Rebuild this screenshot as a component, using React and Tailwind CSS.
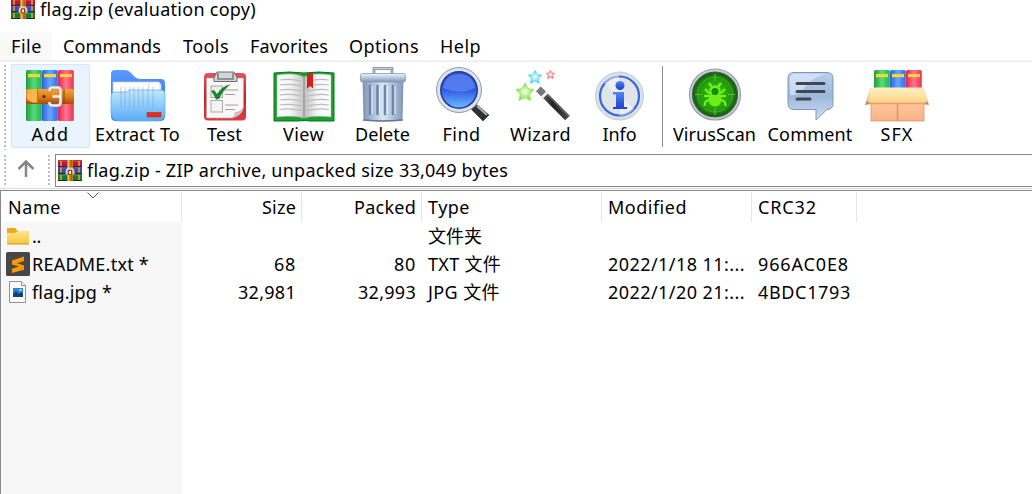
import { useLayoutEffect, useRef, useState } from 'react';

// Text whose tracking is adjusted so the run occupies w pixels.
function Label({ w, children, className = '' }) {
  const ref = useRef(null);
  const [gap, setGap] = useState(0);
  useLayoutEffect(() => {
    const natural = ref.current.getBoundingClientRect().width;
    setGap((w - natural) / children.length);
  }, []);
  return (
    <span ref={ref} className={`inline-block whitespace-pre ${className}`} style={{ letterSpacing: gap }}>
      {children}
    </span>
  );
}

const gradients = [
  ['green', 0, ['#1c9a45', '#58dc78', '#1fb04c']],
  ['blue', 0, ['#2a62dc', '#66a8ff', '#2f6cf0']],
  ['red', 0, ['#e3244a', '#ff7890', '#f02f50']],
  ['belt', 1, ['#f2a53a', '#e0801a', '#a84c08']],
  ['back', 1, ['#5c9cff', '#3f7df5', '#2f62dd']],
  ['front', 1, ['#c4e8ff', '#8accfc', '#5aa9f5']],
  ['clip', 1, ['#e8525a', '#d0202c', '#e03a42']],
  ['page', 0, ['#ffffff', '#f4f4f4', '#c4c4c4']],
  ['page2', 0, ['#bdbdbd', '#f6f6f6', '#ffffff']],
  ['can', 0, ['#7f98b8', '#dbe7f5', '#829bbc']],
  ['lid', 1, ['#f2f7fc', '#b6c8dd', '#7d96b6']],
  ['lens', 1, ['#2a51d8', '#2f5be6', '#69b8ff']],
  ['wand', 0, ['#777777', '#222222', '#444444']],
  ['info', 1, ['#5488f2', '#345fdf', '#2440d0']],
  ['bubble', 1, ['#b9cfec', '#9db8dc', '#d2dfef']],
  ['box', 1, ['#ffc69a', '#ffc093', '#f9b183']],
  ['flap', 1, ['#fff0bf', '#fde3a2', '#fbd18c']],
  ['folder', 1, ['#ffe38c', '#ffd765', '#f9c840']],
];

function Defs() {
  return (
    <svg className="absolute size-0" aria-hidden="true">
      <defs>
        {gradients.map(([id, vertical, c]) => (
          <linearGradient key={id} id={id} x1="0" y1="0" x2={vertical ? 0 : 1} y2={vertical ? 1 : 0}>
            <stop offset="0" stopColor={c[0]} />
            <stop offset=".5" stopColor={c[1]} />
            <stop offset="1" stopColor={c[2]} />
          </linearGradient>
        ))}
        <radialGradient id="virus">
          <stop offset="0" stopColor="#44c814" />
          <stop offset=".7" stopColor="#209a0c" />
          <stop offset="1" stopColor="#0d5d06" />
        </radialGradient>
        <radialGradient id="starGreen"><stop offset="0" stopColor="#fff" /><stop offset="1" stopColor="#75e329" /></radialGradient>
        <radialGradient id="starBlue"><stop offset="0" stopColor="#fff" /><stop offset="1" stopColor="#35cdf8" /></radialGradient>
        <radialGradient id="starRed"><stop offset="0" stopColor="#fff" /><stop offset="1" stopColor="#f4606a" /></radialGradient>
      </defs>
    </svg>
  );
}

function Books({ x, y, h }) {
  return (
    <g>
      {['green', 'blue', 'red'].map((c, i) => (
        <g key={c}>
          <rect x={x + i * 16} y={y} width="15.8" height={h} rx="1.5" fill={`url(#${c})`} />
          <rect x={x + 2 + i * 16} y={y + 4} width="12" height="3.2" fill="#ffd52e" />
        </g>
      ))}
    </g>
  );
}

const AddIcon = (
  <g>
    <Books x={26} y={70} h={51} />
    <path d="M26 89h3q-3 7 0 15h-3z" fill="#9b4b0a" />
    <rect x="26" y="89" width="48" height="15" rx="2" fill="url(#belt)" />
    <path d="M27 95q1-5 6-5.500h4v13h-4q-5-1-6-5z" fill="#f9b650" />
    <path d="M37.500 89.500v14" stroke="#c56c14" />
    <path d="M64 89v15" stroke="#8a3e08" strokeWidth="1" />
    <circle cx="44" cy="96.500" r="1.500" fill="#4b2104" />
    <path d="M49.500 91v-1q0-2.500 3-2.500h5q3 0 3 3v12q0 3-3 3h-5q-3 0-3-2.500v-1" fill="none" stroke="#80878f" strokeWidth="3.400" />
    <path d="M49.500 91v-1q0-2.500 3-2.500h5q3 0 3 3v12q0 3-3 3h-5q-3 0-3-2.500v-1" fill="none" stroke="#eceff1" strokeWidth="2.400" />
    <path d="M52.500 96.500h7.500" stroke="#f2f4f5" strokeWidth="2.600" />
    <path d="M53 98.300h6" stroke="#8a8f94" strokeWidth=".8" />
  </g>
);
const ExtractIcon = (
  <g>
    <path d="M111 74q0-4 4-4h10q3 0 5 2l5 5q2 2 5 2h21q4 0 4 4v33q0 5-5 5h-44q-5 0-5-5z" fill="url(#back)" />
    <path d="M113 82h46l2 3v25h-48z" fill="#fff" stroke="#c6d9ee" strokeWidth=".7" />
    <path d="M149 82v24M160 84v20" stroke="#d8dfe9" strokeWidth="1" />
    <path d="M111 96q0-4 4-4h9q3 0 5-1.500t5-.5h27q4 0 4 4v19q0 8-8 8h-38q-8 0-8-8z" fill="url(#front)" stroke="#59a9ee" strokeWidth=".7" />
    {[121, 125, 129.500, 134, 138.500, 143, 148, 153].map((x) => (
      <path key={x} d={`M${x} 87v21`} stroke="#7c9fbd" strokeWidth="1.300" opacity=".4" />
    ))}
    <rect x="147" y="112.500" width="14" height="4.500" fill="#eb2b16" stroke="#b52512" strokeWidth=".5" />
  </g>
);
const TestIcon = (
  <g>
    <rect x="204" y="73" width="42" height="47.500" rx="4" fill="url(#clip)" />
    <path d="M206.500 78h37v29q-1 9-12 11h-25z" fill="#f8f8f8" stroke="#a9a9a9" strokeWidth=".6" />
    <path d="M243.500 107q-3 5-9 5 1 5-5 6 12-1 14-11z" fill="#c4c4c4" />
    <path d="M214 77.500l3-5.500h17l3 5.500v4h-23z" fill="#d3d5d6" stroke="#696d70" />
    <path d="M218 73v6h15v-6" fill="none" stroke="#777c80" strokeWidth="1.500" />
    <rect x="211" y="86" width="11.500" height="11.500" fill="#eee" stroke="#aaa" />
    <rect x="211" y="100.500" width="11.500" height="11.500" fill="#f4f4f4" stroke="#aaa" />
    <path d="M225 90h13M225 94.500h10M225 105h13M225 109.500h10" stroke="#a5999b" strokeWidth="1.200" />
    <path d="M211 91l3-1 3 4q5-8 14-10-8 6-12 15l-3 .5q-2-5-5-8.500z" fill="#16872c" />
  </g>
);
const ViewIcon = (
  <g>
    <path d="M274 73q15-2 30 0 15-2 30 0v48h-24q-6-1-12 0h-24z" fill="#18a12a" stroke="#08731a" />
    <path d="M277 75q18-3 27 2v41q-10-3-27-1z" fill="url(#page)" stroke="#aaa" strokeWidth=".5" />
    <path d="M331 75q-18-3-27 2v41q10-3 27-1z" fill="url(#page2)" stroke="#aaa" strokeWidth=".5" />
    {[80, 85, 90, 95, 100, 105, 109.500].map((y) => (
      <path key={y} d={`M279.500 ${y}q12-1.500 22 1M307 ${y + 1}q12-2.500 22-1`} fill="none" stroke="#bcbcbc" strokeWidth="1.200" />
    ))}
    <path d="M304 77v41" stroke="#888" strokeWidth=".8" />
    <path d="M307 73.500h6v15l-3-2.500-3 3z" fill="#d3201d" />
  </g>
);
const DeleteIcon = (
  <g>
    <path d="M374 74v-5.500h18V74" fill="none" stroke="#6d7f98" strokeWidth="2.600" />
    <path d="M374 74v-5.500h18V74" fill="none" stroke="#c5d0df" strokeWidth="1" />
    <path d="M363 81h40l-1 39q-19 2-38 0z" fill="url(#can)" stroke="#667f9f" strokeWidth=".7" />
    {[370, 377.500, 385, 393].map((x) => (
      <g key={x}>
        <path d={`M${x} 86v28`} stroke="#6b87ac" strokeWidth="2.600" strokeLinecap="round" />
        <path d={`M${x + 2} 86v28`} stroke="#edf4fb" strokeWidth="1" />
      </g>
    ))}
    <path d="M363 120q20 2 40 0" fill="none" stroke="#637b9b" strokeWidth="1.500" />
    <rect x="360.500" y="73.500" width="45" height="8.500" rx="2" fill="url(#lid)" stroke="#8299b5" strokeWidth=".8" />
  </g>
);
const FindIcon = (
  <g>
    <path d="M476 104l13 11-6 6-12-12z" fill="#2f3137" stroke="#575a60" />
    <path d="M477 106l10 9" stroke="#a9adb5" strokeWidth="2" />
    <path d="M471 103l4-3 3 3-4 4z" fill="#a6adb7" />
    <circle cx="459" cy="90" r="22.500" fill="#dce2e8" stroke="#8e99a7" />
    <circle cx="459" cy="90" r="19" fill="#203b91" />
    <circle cx="459" cy="90" r="17.500" fill="url(#lens)" />
    <path d="M443 88q2-14 16-14t16 14q-15 7-32 0z" fill="#8baefc" opacity=".4" />
  </g>
);
const star = 'M0-9L3-3.300 9-2.500 4.600 2 5.500 8.500 0 5.500-6 8.500-4.800 2-9-2.500-3-3.300z';
const WizardIcon = (
  <g>
    <path d="M538.500 89l29 29" stroke="url(#wand)" strokeWidth="6.500" />
    <path d="M540 87.500l29 29" stroke="#89898b" strokeWidth="1" />
    <path d="M538.500 89l5 5" stroke="#777" strokeWidth="6.500" />
    <path d="M543.500 94l2 2" stroke="#f1f1f1" strokeWidth="7" />
    <path d={star} transform="translate(525 92)" fill="url(#starGreen)" stroke="#8be853" strokeWidth=".8" />
    <path d={star} transform="translate(535 77) scale(.76)" fill="url(#starBlue)" stroke="#6adcf5" />
    <path d={star} transform="translate(550.500 74.500) scale(.5)" fill="url(#starRed)" stroke="#f07d83" />
  </g>
);
const InfoIcon = (
  <g>
    <circle cx="619.500" cy="96" r="24" fill="#d9dfe5" stroke="#c3ccd6" />
    <circle cx="619.500" cy="96" r="19.500" fill="#dfe4e9" stroke="#3565df" strokeWidth="2.200" />
    <path d="M619 96L604 83q6-8 15-8zM620 96l14 13q-6 7-14 7z" fill="#fff" opacity=".45" />
    <circle cx="620" cy="85.500" r="4.500" fill="url(#info)" />
    <path d="M613 92h11v15h3v2h-14v-2h3V94.500h-3z" fill="url(#info)" />
  </g>
);
const VirusIcon = (
  <g>
    <circle cx="715" cy="94.500" r="25.500" fill="#c7cdd3" stroke="#98a0a9" strokeWidth="1.200" />
    <circle cx="715" cy="94.500" r="22.500" fill="url(#virus)" stroke="#4d5858" strokeWidth="1.200" />
    <circle cx="715" cy="94.500" r="17.500" fill="none" stroke="#4ca938" />
    <path d="M715 74v7M715 108v7M695 94.500h7M728 94.500h7" stroke="#5cba43" strokeWidth="1.200" />
    <path d="M709 83l3 4M721 83l-3 4M705 89l4 4h3M725 89l-4 4h-3M704 96h6l2 3M726 96h-6l-2 3M709 100q-5 1-4.500 6M721 100q5 1 4.500 6" stroke="#75f31b" strokeWidth="2.200" fill="none" />
    <ellipse cx="715" cy="99.500" rx="6.500" ry="7" fill="#70ed19" />
    <circle cx="715" cy="91" r="5.800" fill="#70ed19" />
    <circle cx="715" cy="91.500" r="3.500" fill="#168a08" />
  </g>
);
const CommentIcon = (
  <g>
    <path d="M794 72.500h33q6 0 6 6v25q0 6-6 6l-11 10.500v-10.500h-22q-6 0-6-6v-25q0-6 6-6z" fill="url(#bubble)" stroke="#7c98be" />
    <path d="M795 74h30q-12 3-20 13t-15 8V79q0-5 5-5z" fill="#e5effb" opacity=".6" />
    <path d="M797 83.500h27M797 91.500h27M797 99h13" stroke="#424650" strokeWidth="3" strokeLinecap="round" />
  </g>
);
const SfxIcon = (
  <g>
    <Books x={874} y={70} h={22} />
    <path d="M871 88l-6 17 6-1zM923 88l6 17-6-1z" fill="#c98159" />
    <path d="M871 98h53v23h-53z" fill="url(#box)" stroke="#d88e62" strokeWidth=".7" />
    <path d="M897.500 104v17" stroke="#d49674" strokeWidth="1.500" />
    <path d="M871 87.500h52l5 14-4 1.500h-53l-4-1.500z" fill="url(#flap)" />
    <path d="M867 101.500l4 2h53l4-2" fill="none" stroke="#ee9f67" strokeWidth="1.300" />
  </g>
);

function RarMark({ className }) {
  return (
    <svg viewBox="0 0 24 21" preserveAspectRatio="none" className={className}>
      <path d="M0 1L1 0h22l1 1v20H0z" fill="#23203a" />
      <path d="M1 0h22l1 1v5H0V1z" fill="#b4183c" />
      <path d="M0 7h24v6H0z" fill="#4644a4" />
      <path d="M0 14h24v6H0z" fill="#157c35" />
      <path d="M1 1h22" stroke="#dc4868" /><path d="M1 8h22" stroke="#6a67c8" /><path d="M1 15h22" stroke="#2f9d4c" />
      <path d="M3 1v5M3 7.500v5M3 15v5M21 1v5M21 7.500v5M21 15v5" stroke="#e8a326" strokeWidth="1.600" />
      <path d="M9 0h6v21H9z" fill="#c77415" />
      <path d="M10.500 0v21" stroke="#ffc345" strokeWidth="1.500" />
      <path d="M13.500 0v21" stroke="#9a4f12" strokeDasharray="1 1" />
      <path d="M8.500 14.500v-3q0-3 3.500-3t3.500 3v3" fill="none" stroke="#d4d0d0" strokeWidth="1.800" />
      <path d="M10 10h4v5h-4z" fill="#90430b" />
      <path d="M11 11h2v3h-2z" fill="#fff0da" />
    </svg>
  );
}

const menu = [
  ['File', 31, 'w-[52px] pl-[11px] bg-[#f9f9f9]'],
  ['Commands', 98, 'w-[120px] pl-[11px]'],
  ['Tools', 46, 'w-[67px] pl-[11px]'],
  ['Favorites', 78, 'w-[99px] pl-[11px]'],
  ['Options', 70, 'w-[91px] pl-[11px]'],
  ['Help', 41, 'w-[63px] pl-[11px]'],
];

const tools = [
  ['Add', 38, 11, 79, 'w-[79px] bg-[#e9f4fe] border-[#cce8ff]', AddIcon],
  ['Extract To', 85, 90, 95, 'w-[95px] border-transparent', ExtractIcon],
  ['Test', 35, 185, 79, 'w-[79px] border-transparent', TestIcon],
  ['View', 41, 264, 79, 'w-[79px] border-transparent', ViewIcon],
  ['Delete', 55, 343, 79, 'w-[79px] border-transparent', DeleteIcon],
  ['Find', 38, 422, 79, 'w-[79px] border-transparent', FindIcon],
  ['Wizard', 61, 501, 79, 'w-[79px] border-transparent', WizardIcon],
  ['Info', 34, 580, 79, 'w-[79px] border-transparent', InfoIcon],
  null,
  ['VirusScan', 83, 671, 87, 'w-[87px] border-transparent', VirusIcon],
  ['Comment', 85, 758, 104, 'w-[104px] border-transparent', CommentIcon],
  ['SFX', 33, 862, 70, 'w-[70px] border-transparent', SfxIcon],
];

const FolderIcon = (
  <svg viewBox="0 0 24 20" className="h-5 w-6">
    <path d="M1 2h8l3 3h11v13H1z" fill="#edaa22" />
    <path d="M1 7h8l3-2h11v12.500H1z" fill="url(#folder)" />
    <path d="M1 18h22" stroke="#d99b22" />
  </svg>
);
const SublimeIcon = (
  <svg viewBox="0 0 24 24" className="size-6">
    <rect width="24" height="24" rx="1.500" fill="#474747" />
    <path d="M6 8.500L18 4.500v4.500L11 11.300l7 2.200v4.300L6 21v-4.300l7-2.200-7-2z" fill="#ff9800" />
  </svg>
);
const ImageIcon = (
  <svg viewBox="0 0 24 24" className="size-6">
    <path d="M3.500 1.500h12l4 4v17h-16z" fill="#fafafa" stroke="#929292" />
    <path d="M15.500 1.500v4h4" fill="#eee" stroke="#929292" />
    <path d="M7 8h10v9H7z" fill="#2986d8" />
    <path d="M7 14l3-3 3 3 2-2 2 2v3H7z" fill="#12416e" />
    <circle cx="14.500" cy="10" r="1" fill="#fff" />
  </svg>
);

const headers = [
  ['Name', 53, 'w-[181px] pl-[7px]'],
  ['Size', 34, 'w-[120px] justify-end pr-[5px]'],
  ['Packed', 62, 'w-[120px] justify-end pr-[5px]'],
  ['Type', 42, 'w-[180px] pl-1.5'],
  ['Modified', 79, 'w-[150px] pl-1.5'],
  ['CRC32', 59, 'w-[105px] pl-1.5'],
];

const rows = [
  { icon: FolderIcon, cells: [['..', 9], null, null, ['文件夹', 54], null, null] },
  { icon: SublimeIcon, cells: [['README.txt *', 117], ['68', 22], ['80', 22], ['TXT 文件', 73], ['2022/1/18 11:...', 137], ['966AC0E8', 91]] },
  { icon: ImageIcon, cells: [['flag.jpg *', 80], ['32,981', 58], ['32,993', 58], ['JPG 文件', 72], ['2022/1/20 21:...', 137], ['4BDC1793', 93]] },
];
const cellClass = [
  'w-[152px] pl-0.5',
  'w-[120px] justify-end pr-1.5',
  'w-[120px] justify-end pr-1.5',
  'w-[180px] pl-1.5',
  'w-[150px] pl-1.5',
  'w-[105px] pl-1.5',
];

function Grip({ className }) {
  return (
    <svg className={className} aria-hidden="true">
      <path d="M1 1v100" stroke="#bdbdbd" strokeWidth="2" strokeDasharray="2 2" />
    </svg>
  );
}

export default function App() {
  return (
    <div className="flex h-[494px] w-[1032px] flex-col overflow-hidden bg-white font-['Noto_Sans','Noto_Sans_CJK_SC',sans-serif] text-[18px] leading-6 text-black">
      <Defs />
      <header className="flex h-8 shrink-0 items-start pl-[11px]">
        <RarMark className="-mt-px h-5 w-6" />
        <Label w={216} className="ml-[5px] leading-[18px]">flag.zip (evaluation copy)</Label>
      </header>
      <nav className="flex h-[30px] shrink-0 items-center border-b-2 border-[#f0f0f0]">
        {menu.map(([name, w, cls]) => (
          <div key={name} className={`flex h-7 items-center ${cls}`}><Label w={w}>{name}</Label></div>
        ))}
      </nav>
      <div className="flex h-[90px] shrink-0 items-start pt-0.5">
        <Grip className="ml-1 mr-[5px] h-[86px] w-0.5" />
        {tools.map((t) => t ? (
          <button key={t[0]} className={`flex h-[84px] shrink-0 flex-col items-center rounded-xs border pt-px ${t[4]}`}>
            <svg viewBox={`${t[2] + 1} 66 ${t[3] - 2} 56`} className="h-14 w-full shrink-0">{t[5]}</svg>
            <Label w={t[1]}>{t[0]}</Label>
          </button>
        ) : (
          <div key="divider" className="ml-[3px] mr-2 mt-0.5 h-[81px] w-px bg-[#8d8d8d]" />
        ))}
      </div>
      <div className="flex h-[37px] shrink-0 items-start border-b border-[#dcdcdc] pt-0.5">
        <Grip className="ml-1 h-[33px] w-0.5" />
        <svg viewBox="0 0 20 20" className="ml-2.5 mt-[5px] size-5" fill="none" stroke="#868686" strokeWidth="2.500">
          <path d="M10 18V2.500M2.500 10L10 2.500 17.500 10" />
        </svg>
        <Grip className="ml-3 h-[33px] w-0.5" />
        <div className="ml-[5px] flex h-[33px] flex-1 items-center border border-r-0 border-[#858585] pl-0.5">
          <RarMark className="-mt-px h-[21px] w-6" />
          <Label w={421} className="-mt-0.5 ml-[5px]">flag.zip - ZIP archive, unpacked size 33,049 bytes</Label>
        </div>
      </div>
      <main className="mt-px flex flex-1 flex-col border-l border-t border-[#828790]">
        <div className="flex h-[31px] shrink-0 pt-px">
          {headers.map(([name, w, cls], i) => (
            <div key={name} className={`relative flex h-[30px] shrink-0 items-center border-r border-[#e5e5e5] ${cls}`}>
              <Label w={w}>{name}</Label>
              {i === 0 && (
                <svg viewBox="0 0 12 7" className="absolute left-[86px] top-0 h-[7px] w-3" fill="none" stroke="#555"><path d="M.5.5L6 6 11.500.5" /></svg>
              )}
            </div>
          ))}
        </div>
        <div className="relative flex-1">
          <div className="absolute inset-y-0 left-px w-[180px] bg-[#f7f7f7]" />
          <div className="relative">
            {rows.map((row, r) => (
              <div key={r} className="flex h-7 items-center">
                <div className="ml-[5px] flex w-6 justify-center">{row.icon}</div>
                {row.cells.map((cell, i) => (
                  <div key={i} className={`flex shrink-0 items-center ${cellClass[i]}`}>
                    {cell && <Label w={cell[1]}>{cell[0]}</Label>}
                  </div>
                ))}
              </div>
            ))}
          </div>
        </div>
      </main>
    </div>
  );
}
